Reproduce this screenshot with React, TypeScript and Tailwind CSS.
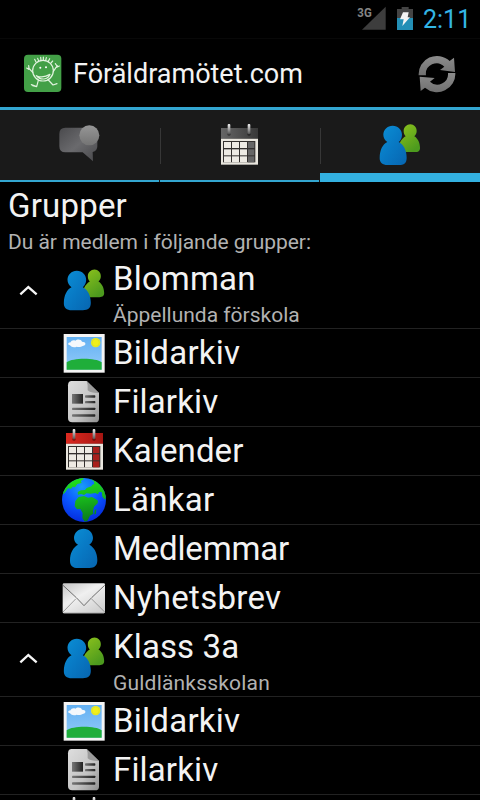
import type { ReactNode } from 'react';

function Gradients() {
  return (
    <svg className="absolute h-0 w-0" aria-hidden="true">
      <defs>
        <linearGradient id="blue" x1="0" y1="0" x2="1" y2="1">
          <stop offset="0" stopColor="#0b90d6" />
          <stop offset="0.5" stopColor="#0879c4" />
          <stop offset="1" stopColor="#0765b0" />
        </linearGradient>
        <linearGradient id="green" x1="0" y1="0" x2="0.6" y2="1">
          <stop offset="0" stopColor="#8fc31c" />
          <stop offset="1" stopColor="#4c9a1e" />
        </linearGradient>
        <linearGradient id="paper" x1="0" y1="0" x2="1" y2="1">
          <stop offset="0" stopColor="#dedede" />
          <stop offset="0.6" stopColor="#c4c4c4" />
          <stop offset="1" stopColor="#8e8e8e" />
        </linearGradient>
        <linearGradient id="ink" x1="0" y1="0" x2="1" y2="0">
          <stop offset="0" stopColor="#777" />
          <stop offset="1" stopColor="#222" />
        </linearGradient>
        <linearGradient id="sky" x1="0" y1="0" x2="0" y2="1">
          <stop offset="0" stopColor="#62b0f2" />
          <stop offset="1" stopColor="#93cbfa" />
        </linearGradient>
        <linearGradient id="red" x1="0" y1="0" x2="1" y2="0">
          <stop offset="0" stopColor="#dc2a20" />
          <stop offset="1" stopColor="#a51612" />
        </linearGradient>
        <linearGradient id="gray" x1="0" y1="0" x2="1" y2="0">
          <stop offset="0" stopColor="#666" />
          <stop offset="1" stopColor="#383838" />
        </linearGradient>
        <linearGradient id="ring" x1="0" y1="0" x2="0" y2="1">
          <stop offset="0" stopColor="#f2f2f2" />
          <stop offset="1" stopColor="#555" />
        </linearGradient>
        <linearGradient id="mail" x1="0" y1="0" x2="0.8" y2="1">
          <stop offset="0" stopColor="#c4c4c4" />
          <stop offset="0.45" stopColor="#f0f0f0" />
          <stop offset="1" stopColor="#cfcfcf" />
        </linearGradient>
        <linearGradient id="sync" x1="0" y1="0" x2="0" y2="1">
          <stop offset="0" stopColor="#8c8c8c" />
          <stop offset="1" stopColor="#707070" />
        </linearGradient>
        <linearGradient id="bubble" x1="0" y1="0" x2="1" y2="1">
          <stop offset="0" stopColor="#4a4a4d" />
          <stop offset="0.5" stopColor="#6a6a6d" />
          <stop offset="1" stopColor="#47474a" />
        </linearGradient>
        <linearGradient id="ball" x1="0" y1="0" x2="0" y2="1">
          <stop offset="0" stopColor="#969696" />
          <stop offset="1" stopColor="#747474" />
        </linearGradient>
        <radialGradient id="ocean" cx="0.45" cy="0.2" r="0.85">
          <stop offset="0" stopColor="#1a9cf8" />
          <stop offset="0.5" stopColor="#0a56ff" />
          <stop offset="1" stopColor="#0426d8" />
        </radialGradient>
        <linearGradient id="land" gradientUnits="userSpaceOnUse" x1="95" y1="158" x2="115" y2="285">
          <stop offset="0" stopColor="#1fe01c" />
          <stop offset="0.45" stopColor="#18b81c" />
          <stop offset="1" stopColor="#0b7a1c" />
        </linearGradient>
        <clipPath id="globe">
          <circle cx="102" cy="222" r="66" />
        </clipPath>
      </defs>
    </svg>
  );
}

/* Pair of figures drawn in a 122 x 124 box. */
function PeopleShape() {
  return (
    <>
      <path fill="url(#green)" d="M92 0c11 0 19 9 19 20 0 7-3 12-7 16 10 6 17 19 17 34 0 10-5 13-14 13H72c-9 0-14-4-14-13 0-15 9-28 20-34-4-4-6-9-6-16C72 9 81 0 92 0Z" />
      <path fill="url(#blue)" d="M39 4c16 0 28 12 28 27 0 10-4 17-10 22 14 7 24 24 24 47 0 16-8 22-24 22H24C8 122 0 115 0 101c0-24 9-41 23-48-7-5-12-13-12-22C11 16 23 4 39 4Z" />
    </>
  );
}

function PeopleIcon() {
  return (
    <svg viewBox="180 0 150 219" className="h-[73px] w-[50px] shrink-0">
      <g transform="translate(191.500 43.500)"><PeopleShape /></g>
    </svg>
  );
}

function PictureIcon() {
  return (
    <svg viewBox="30 3 150 144" className="h-12 w-[50px] shrink-0">
      <rect x="41" y="18" width="123" height="116" fill="#f4f4f4" />
      <rect x="50" y="27" width="105" height="98" fill="url(#sky)" />
      <path d="M50 103c18-14 87-14 105 0v22H50Z" fill="#1fae3a" />
      <circle cx="137" cy="44" r="14" fill="#f0f01c" />
      <circle cx="137" cy="44" r="11" fill="none" stroke="#cfd42a" strokeWidth="1.500" />
      <path d="M60 52c-7-1-8-8 2-9 1-6 9-8 14-5 6-6 18-4 20 3 12 0 14 10 4 12-8 5-16 4-20 3-7 3-16 2-20-4Z" fill="#f4f8fc" />
    </svg>
  );
}

function FileIcon() {
  return (
    <svg viewBox="30 150 150 144" className="h-12 w-[50px] shrink-0">
      <path d="M65 159h45l37 36v77q0 11-12 11H67q-13 0-13-13V172q0-13 11-13Z" fill="url(#paper)" />
      <path d="M110 159l37 36q-24 1-34-8 2-15-3-28Z" fill="#9b9b9b" />
      <rect x="66" y="198" width="33" height="29" fill="url(#ink)" />
      <g fill="url(#ink)">
        <rect x="105" y="202" width="31" height="7" rx="2" />
        <rect x="105" y="219" width="31" height="7" rx="2" />
        <rect x="66" y="239" width="70" height="7" rx="2" />
        <rect x="66" y="259" width="70" height="7" rx="2" />
      </g>
    </svg>
  );
}

function CalendarShape({ top, accent }: { top: string; accent: string }) {
  return (
    <>
      <rect x="48" y="52" width="111" height="79" fill="#e9e6de" />
      <rect x="48" y="21" width="111" height="32" fill={top} />
      <rect x="54" y="60" width="97" height="64" fill="#33302e" />
      <g fill="#eeebe4">
        {[63, 85, 106].map((y) => [57, 81, 105].map((x) => <rect key={`${x}-${y}`} x={x} y={y} width="21" height="18" />))}
      </g>
      <g fill={accent}>
        {[63, 85, 106].map((y) => <rect key={y} x="129" y={y} width="19" height="18" />)}
      </g>
      <circle cx="72" cy="40" r="5" fill="#000" opacity="0.35" />
      <circle cx="132" cy="40" r="5" fill="#000" opacity="0.35" />
      <rect x="68" y="9" width="8" height="30" rx="3" fill="url(#ring)" />
      <rect x="128" y="9" width="8" height="30" rx="3" fill="url(#ring)" />
    </>
  );
}

function CalendarIcon() {
  return (
    <svg viewBox="30 3 150 144" className="h-12 w-[50px] shrink-0">
      <CalendarShape top="url(#red)" accent="#a8201c" />
    </svg>
  );
}

function GlobeIcon() {
  return (
    <svg viewBox="30 150 150 144" className="h-12 w-[50px] shrink-0">
      <circle cx="102" cy="222" r="66" fill="url(#ocean)" />
      <g clipPath="url(#globe)" fill="url(#land)">
        <path d="M36 206l8-22 20-24 34-6 3 6-9 5 3 6-13 3-7 10-8-2-3 6-10-1-10 14Z" />
        <path d="M116 155l24 5 20 18 12 30-7 13-8-9-2-14-8 0-3 7-8-4-14 2-12-1-8 5-9-3-9 2-1-8 10-5 12-1 5-6 14-5 3-5 6-2-2-8Z" />
        <path d="M76 225l10-12 16-3 12 5 12-2 12 7 6 4-1 8-11 10-3 13 1 8-10 6-8 16-8 2-7-11 1-15-7-12-10 1-7-9Z" />
        <path d="M134 252l5-3-1 14-5 3Z" />
      </g>
    </svg>
  );
}

function MemberIcon() {
  return (
    <svg viewBox="30 9 150 144" className="h-12 w-[50px] shrink-0">
      <path fill="url(#blue)" d="M101 20c16 0 28 12 28 28 0 9-5 16-11 20 14 8 24 23 24 47 0 16-8 23-24 23H84c-16 0-24-7-24-22 0-25 10-40 24-48-7-4-12-11-12-20 0-16 13-28 29-28Z" />
    </svg>
  );
}

function MailIcon() {
  return (
    <svg viewBox="30 156 150 144" className="h-12 w-[50px] shrink-0">
      <rect x="38" y="184" width="127" height="90" rx="4" fill="url(#mail)" />
      <path d="M39 270l38-39M164 270l-39-39" fill="none" stroke="#777" strokeWidth="2" />
      <path d="M39 190l40 37 23 24 23-24 39-37" fill="none" stroke="#555" strokeWidth="2.500" />
      <path d="M41 273h121" stroke="#999" strokeWidth="2" />
    </svg>
  );
}

function StatusBar() {
  return (
    <div className="flex h-[38px] items-start">
      <svg viewBox="0 0 240 114" className="ml-[340px] h-[38px] w-[80px] shrink-0">
        <path d="M137 20v69H66Z" fill="#3d3d3d" />
        <text x="52" y="51" fontSize="40" fontWeight="700" fill="#858585" textLength="43" lengthAdjust="spacingAndGlyphs" className="font-['Roboto',sans-serif]">3G</text>
        <path d="M171 27h14v-6h21v6h13v27h-48Z" fill="#444" />
        <rect x="171" y="54" width="48" height="36" fill="#238fb6" />
        <path d="M189 37h17l-3 15h7l-23 26 4-20h-11Z" fill="#f4f4f4" />
      </svg>
      <span className="ml-[3px] mt-[3px] text-[25px] leading-[34px] text-[#33b5e5]">2:11</span>
    </div>
  );
}

function ActionBar() {
  return (
    <header className="flex h-[69px] items-center border-t border-[#080808] pl-6">
      <svg viewBox="0 0 114 114" className="h-[38px] w-[38px] shrink-0">
        <rect x="0" y="2" width="112" height="112" rx="12" fill="#43a047" />
        <g fill="none" stroke="#e2f3df" strokeWidth="3.500" strokeLinecap="round" strokeLinejoin="round">
          <circle cx="57" cy="50" r="31" />
          <path d="M37 65q20 9 41-4-5 13-18 14-15 1-23-10Z" />
          <path d="M36 24l-4-8M44 21l-3-8M51 19l-1-9M58 18v-9M65 19l2-8M73 22l4-8M80 28l6-7" />
          <path d="M26 55L14 42M14 46l-6-4M15 42l-1-7M88 52l12-17M95 41l11-5M99 36l-5-7" />
          <path d="M43 79l-5 19-16-6M38 98l-12-3M73 78l14 15 12-4" />
        </g>
        <circle cx="49" cy="41" r="3" fill="#fff" />
        <circle cx="66" cy="40" r="3" fill="#fff" />
      </svg>
      <h1 className="ml-[11px] grow translate-y-px text-[27px] leading-[34px] font-normal text-[#f3f3f3]">Föräldramötet.com</h1>
      <svg viewBox="234 165 114 114" className="mr-[24px] h-[38px] w-[38px] shrink-0 translate-y-px">
        <g fill="url(#sync)">
          <path d="M236 226A55 55 0 0 1 329 183L342 173L345 216L300 210L313 200A32 32 0 0 0 258 226Z" />
          <path d="M346 219A55 55 0 0 1 255 263L242 273L239 230L284 234L270 245A32 32 0 0 0 324 219Z" />
        </g>
      </svg>
    </header>
  );
}

function Tabs() {
  return (
    <nav className="grid h-[75px] grid-cols-3 border-t-[3px] border-[#33a6d0] bg-[#1a1a1a]">
      <div className="mr-px flex border-b-2 border-[#33a6d0]">
        <svg viewBox="0 18 477 210" className="h-[70px] w-[159px]">
          <path d="M196 71h78q18 0 18 18v38q0 14-14 17l1 28-31-27h-52q-18 0-18-18V89q0-18 18-18Z" fill="url(#bubble)" />
          <circle cx="268" cy="94" r="30" fill="url(#ball)" />
        </svg>
      </div>
      <div className="mr-px flex border-b-2 border-[#33a6d0]">
        <div className="mt-[18px] h-9 w-px bg-[#373737]" />
        <svg viewBox="3 18 474 210" className="h-[70px] w-[158px]">
          <g transform="translate(135 51)"><CalendarShape top="url(#gray)" accent="#666" /></g>
        </svg>
      </div>
      <div className="flex border-b-[9px] border-[#33b0e0]">
        <div className="mt-[18px] h-9 w-px bg-[#373737]" />
        <svg viewBox="243 18 477 189" className="h-[63px] w-[159px]">
          <g transform="translate(419 61)"><PeopleShape /></g>
        </svg>
      </div>
    </nav>
  );
}

function GroupRow({ title, school, titleClass = '', schoolClass = '' }: { title: string; school: string; titleClass?: string; schoolClass?: string }) {
  return (
    <div className="flex h-[74px] border-b border-[#222]">
      <svg viewBox="0 0 180 219" className="h-[73px] w-[60px] shrink-0">
        <path d="M61 118l24-22 25 22" fill="none" stroke="#f5f5f5" strokeWidth="7" />
      </svg>
      <PeopleIcon />
      <div className="ml-[3px] flex flex-col">
        <span className={`mt-[3px] h-[41px] text-[33px] leading-[41px] ${titleClass}`}>{title}</span>
        <span className={`mt-[3px] text-[21px] leading-[26px] text-[#b2b2b2] ${schoolClass}`}>{school}</span>
      </div>
    </div>
  );
}

function ItemRow({ icon, label, className = '' }: { icon: ReactNode; label?: string; className?: string }) {
  return (
    <div className="flex h-[49px] border-b border-[#222] pl-[60px]">
      {icon}
      <span className={`ml-[3px] text-[33px] leading-[48px] ${className}`}>{label}</span>
    </div>
  );
}

export default function App() {
  return (
    <main className="relative h-[800px] w-[480px] overflow-hidden bg-black font-['Roboto',sans-serif] text-[#f3f3f3]">
      <Gradients />
      <StatusBar />
      <ActionBar />
      <Tabs />
      <section className="flex h-[73px] flex-col pl-2">
        <h2 className="mt-[3px] text-[33px] leading-[41px] font-normal tracking-[0.2px]">Grupper</h2>
        <p className="mt-[3px] text-[21px] leading-[26px] tracking-[-0.03px] text-[#b2b2b2]">Du är medlem i följande grupper:</p>
      </section>
      <GroupRow title="Blomman" school="Äppellunda förskola" titleClass="tracking-[0.15px]" />
      <ItemRow icon={<PictureIcon />} label="Bildarkiv" className="tracking-[0.25px]" />
      <ItemRow icon={<FileIcon />} label="Filarkiv" className="tracking-[0.15px]" />
      <ItemRow icon={<CalendarIcon />} label="Kalender" className="tracking-[0.1px]" />
      <ItemRow icon={<GlobeIcon />} label="Länkar" className="tracking-[0.3px]" />
      <ItemRow icon={<MemberIcon />} label="Medlemmar" className="tracking-[-0.15px]" />
      <ItemRow icon={<MailIcon />} label="Nyhetsbrev" className="tracking-[0.3px]" />
      <GroupRow title="Klass 3a" school="Guldlänksskolan" titleClass="tracking-[0.1px]" schoolClass="tracking-[0.2px]" />
      <ItemRow icon={<PictureIcon />} label="Bildarkiv" className="tracking-[0.25px]" />
      <ItemRow icon={<FileIcon />} label="Filarkiv" className="tracking-[0.15px]" />
      <ItemRow icon={<CalendarIcon />} />
    </main>
  );
}
